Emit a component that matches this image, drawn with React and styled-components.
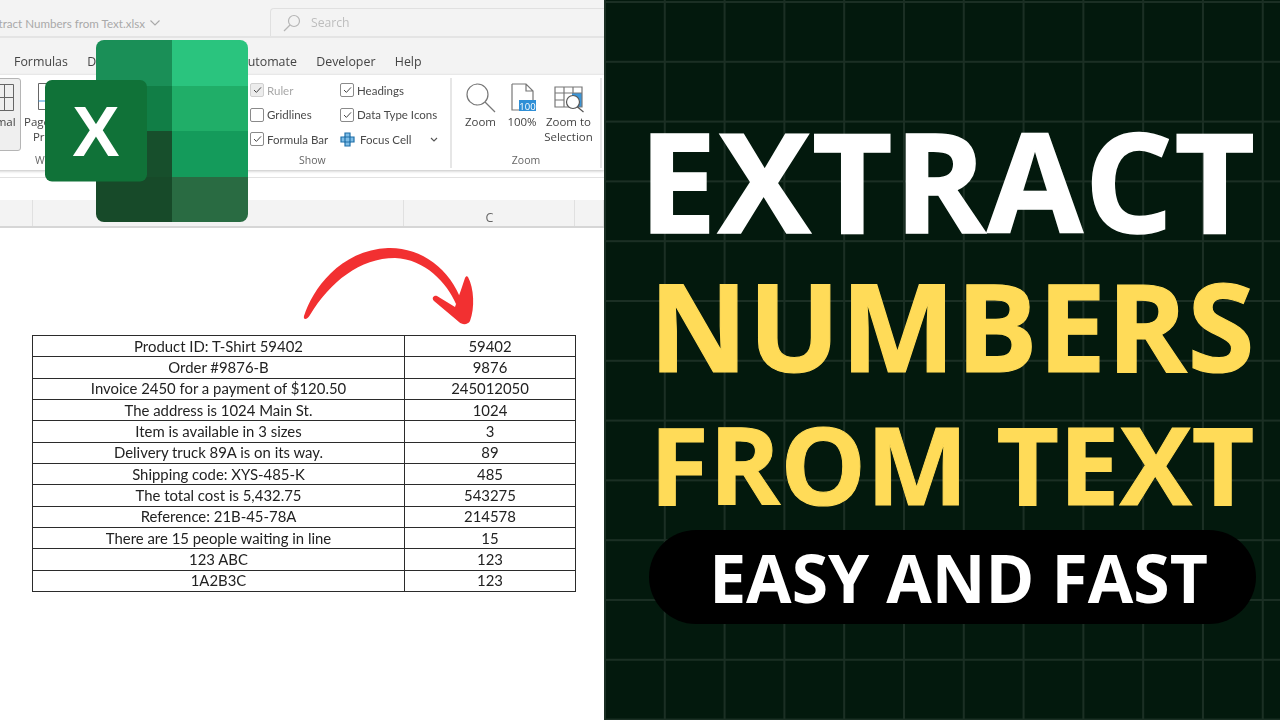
import React from 'react';
import styled, { createGlobalStyle } from 'styled-components';

const GlobalStyle = createGlobalStyle`
  html, body {
    margin: 0;
    padding: 0;
    width: 1280px;
    height: 720px;
    overflow: hidden;
    background: #fff;
  }
`;

const Page = styled.div`
  display: flex;
  width: 1280px;
  height: 720px;
  overflow: hidden;
`;

const LeftPane = styled.div`
  position: relative;
  display: flex;
  flex-direction: column;
  width: 604px;
  height: 720px;
  overflow: hidden;
  background: #fff;
  font-family: "Open Sans", "Liberation Sans", sans-serif;
`;

const ExcelChrome = styled.div`
  display: flex;
  flex-direction: column;
  filter: blur(0.35px);
`;

const TitleBar = styled.div`
  display: flex;
  align-items: stretch;
  height: 38px;
  box-sizing: border-box;
  padding-top: 8px;
  background: #f3f3f3;
  border-bottom: 2px solid #e4e4e4;
`;

const FileName = styled.div`
  display: flex;
  align-items: center;
  gap: 5px;
  width: 270px;
  height: 30px;
  overflow: hidden;
  font-family: Lato, "Open Sans", sans-serif;
  font-size: 11.6px;
  color: #a9a9a9;
  white-space: nowrap;
`;

const FileTitle = styled.span`
  margin-left: -14px;
`;

const SearchBox = styled.div`
  display: flex;
  align-items: center;
  gap: 9px;
  flex: 1;
  padding-left: 11px;
  border: 1px solid #e0e0e0;
  border-bottom: 0;
  border-right: 0;
  border-radius: 4px 0 0 0;
  font-size: 12.2px;
  color: #bdbdbd;
`;

const TabBar = styled.div`
  display: flex;
  align-items: center;
  gap: 19.3px;
  height: 37px;
  padding: 9px 0 0 14px;
  box-sizing: border-box;
  background: #f3f3f3;
  font-size: 12.4px;
  color: #444;
  white-space: nowrap;
`;

const Ribbon = styled.div`
  display: flex;
  height: 95px;
  margin-left: -30px;
  background: #fff;
  box-shadow: 0 1px 3px rgba(0, 0, 0, 0.25);
`;

const Group = styled.div`
  display: flex;
  flex-direction: column;
  flex: none;
  width: ${p => p.$width}px;
  height: 90px;
  margin-top: 3px;
  box-sizing: border-box;
  border-right: ${p => (p.$divider ? '2px solid #e6e6e6' : '0')};
`;

const GroupBody = styled.div`
  display: flex;
  flex: 1;
  min-height: 0;
`;

const GroupLabel = styled.div`
  height: 15px;
  padding-left: ${p => p.$indent || 0}px;
  text-align: ${p => (p.$indent ? 'left' : 'center')};
  font-size: 10.5px;
  line-height: 15px;
  color: #666;
`;

const BigButton = styled.div`
  display: flex;
  flex-direction: column;
  align-items: center;
  flex: none;
  width: ${p => p.$width}px;
  height: ${p => (p.$selected ? 73 : 70)}px;
  box-sizing: border-box;
  padding-top: ${p => (p.$selected ? 4 : 5)}px;
  background: ${p => (p.$selected ? '#efefef' : 'transparent')};
  border: ${p => (p.$selected ? '1px solid #b5b5b5' : '0')};
  border-radius: 3px;
  font-size: 11.5px;
  line-height: 15px;
  color: #444;
  text-align: center;
`;

const IconSlot = styled.div`
  flex: none;
  height: 31px;
`;

const ShowGroupBody = styled(GroupBody)`
  padding: 3px 0 0 0;
  gap: 12px;
`;

const CheckColumn = styled.div`
  display: flex;
  flex-direction: column;
  gap: 6.5px;
  width: ${p => p.$width}px;
`;

const CheckRow = styled.div`
  display: flex;
  align-items: center;
  gap: 3px;
  height: 18px;
  font-family: Lato, "Open Sans", sans-serif;
  font-size: 11.5px;
  color: ${p => (p.$muted ? '#a8a8a8' : '#4a4a4a')};
  white-space: nowrap;
`;

const CheckBox = styled.span`
  display: flex;
  align-items: center;
  justify-content: center;
  flex: none;
  width: 12px;
  height: 12px;
  background: ${p => (p.$muted ? '#ececec' : '#fff')};
  border: 1px solid ${p => (p.$muted ? '#d0d0d0' : '#8a8a8a')};
  border-radius: 2px;
`;

const FocusLabel = styled.span`
  margin: 0 16px 0 2px;
`;

const ZoomGroupBody = styled(GroupBody)`
  padding-left: 8.5px;
  gap: 4.5px;
`;

const FormulaBar = styled.div`
  height: 22px;
  margin-top: 7px;
  background: #fff;
  border-top: 1px solid #e2e2e2;
`;

const ColumnHeader = styled.div`
  display: grid;
  grid-template-columns: 33px 371px 171px 29px;
  height: 28px;
  box-sizing: border-box;
  background: #f3f3f3;
  border-bottom: 2px solid #d6d6d6;
`;

const ColumnCell = styled.div`
  display: flex;
  align-items: center;
  justify-content: center;
  padding: 8px 0 0 1px;
  box-sizing: border-box;
  border-right: 1px solid #e0e0e0;
  font-size: 12.5px;
  color: #666;
`;

const Sheet = styled.div`
  flex: 1;
  padding: 107px 0 0 32px;
  filter: blur(0.3px);
`;

const DataTable = styled.table`
  width: 543px;
  table-layout: fixed;
  border-collapse: collapse;
  font-family: Lato, "Open Sans", sans-serif;
  font-size: 14.9px;
  color: #222;
`;

const DataCell = styled.td`
  box-sizing: border-box;
  height: 21.33px;
  padding: 0;
  border: 1px solid #2b2b2b;
  text-align: center;
  line-height: 19px;
  white-space: nowrap;
`;

const LogoMark = styled.svg`
  position: absolute;
  left: 45px;
  top: 40px;
`;

const CurvedArrow = styled.svg`
  position: absolute;
  left: 296px;
  top: 240px;
`;

const RightPane = styled.div`
  display: flex;
  flex-direction: column;
  align-items: center;
  flex: 1;
  height: 720px;
  box-sizing: border-box;
  padding: 110px 0 0 20px;
  background-color: #03190d;
  background-image:
    linear-gradient(to right, #1b2f24 2px, transparent 2px),
    linear-gradient(to bottom, #1b2f24 2px, transparent 2px);
  background-size: 59.8px 59.8px;
  background-position: 0 1px;
  font-family: "Open Sans", "Noto Sans", sans-serif;
`;

const Headline = styled.div`
  margin-top: ${p => p.$gap || 0}px;
  margin-left: ${p => p.$nudge || 0}px;
  font-size: ${p => p.$size}px;
  font-weight: 700;
  line-height: 1;
  letter-spacing: ${p => p.$track || 0}px;
  color: ${p => p.$color};
  -webkit-text-stroke: ${p => p.$stroke}px ${p => p.$color};
  white-space: nowrap;
`;

const Pill = styled.div`
  display: flex;
  align-items: center;
  justify-content: center;
  width: 607px;
  height: 94px;
  margin-top: 12px;
  box-sizing: border-box;
  padding-left: 13px;
  background: #000;
  border-radius: 47px;
  font-size: 66px;
  font-weight: 700;
  color: #fff;
  white-space: nowrap;
`;

const Check = () => (
  <svg width="9" height="8" viewBox="0 0 9 8" fill="none" stroke="#444" strokeWidth="1">
    <path d="M1 4l2.4 2.4L8 1.4" />
  </svg>
);

const SearchIcon = () => (
  <svg width="20" height="20" viewBox="0 0 20 20" fill="none" stroke="#b5b5b5" strokeWidth="1.2">
    <circle cx="12" cy="8" r="5.5" />
    <path d="M8 12l-6 6" />
  </svg>
);

const Chevron = () => (
  <svg width="10" height="6" viewBox="0 0 10 6" fill="none" stroke="#a9a9a9" strokeWidth="1.1">
    <path d="M0.5 0.5L5 5l4.5-4.5" />
  </svg>
);

const rows = [
  ['Product ID: T-Shirt 59402', '59402'],
  ['Order #9876-B', '9876'],
  ['Invoice 2450 for a payment of $120.50', '245012050'],
  ['The address is 1024 Main St.', '1024'],
  ['Item is available in 3 sizes', '3'],
  ['Delivery truck 89A is on its way.', '89'],
  ['Shipping code: XYS-485-K', '485'],
  ['The total cost is 5,432.75', '543275'],
  ['Reference: 21B-45-78A', '214578'],
  ['There are 15 people waiting in line', '15'],
  ['123 ABC', '123'],
  ['1A2B3C', '123'],
];

const tabs = ['Formulas', 'Data', 'Review', 'View', 'Automate', 'Developer', 'Help'];

const App = () => (
  <Page>
    <GlobalStyle />
    <LeftPane>
      <ExcelChrome>
        <TitleBar>
          <FileName>
            <FileTitle>Extract Numbers from Text.xlsx</FileTitle>
            <Chevron />
          </FileName>
          <SearchBox>
            <SearchIcon />
            Search
          </SearchBox>
        </TitleBar>
        <TabBar>
          {tabs.map(t => <span key={t}>{t}</span>)}
        </TabBar>
        <Ribbon>
          <Group $width={280}>
            <GroupBody>
              <BigButton $width={51} $selected>
                <IconSlot>
                  <svg width="40" height="29" viewBox="0 0 40 29" fill="none" stroke="#666">
                    <path d="M10.5 1.5h27v26h-27zM19.5 1.5v26M28.5 1.5v26M10.5 14.5h27" />
                  </svg>
                </IconSlot>
                Normal
              </BigButton>
              <BigButton $width={66}>
                <IconSlot>
                  <svg width="32" height="29" viewBox="0 0 32 29" fill="none" stroke="#666">
                    <path d="M0.5 0.5h12v26H0.5z" />
                    <path d="M0.5 18h12" stroke="#3a95d8" />
                  </svg>
                </IconSlot>
                Page Break
                <br />
                Preview
              </BigButton>
            </GroupBody>
            <GroupLabel $indent={65}>Workbook Views</GroupLabel>
          </Group>
          <Group $width={202} $divider>
            <ShowGroupBody>
              <CheckColumn $width={78}>
                <CheckRow $muted>
                  <CheckBox $muted><Check /></CheckBox>
                  Ruler
                </CheckRow>
                <CheckRow>
                  <CheckBox />
                  Gridlines
                </CheckRow>
                <CheckRow>
                  <CheckBox><Check /></CheckBox>
                  Formula Bar
                </CheckRow>
              </CheckColumn>
              <CheckColumn $width={105}>
                <CheckRow>
                  <CheckBox><Check /></CheckBox>
                  Headings
                </CheckRow>
                <CheckRow>
                  <CheckBox><Check /></CheckBox>
                  Data Type Icons
                </CheckRow>
                <CheckRow>
                  <svg width="15" height="15" viewBox="0 0 15 15" fill="#7fbde6" stroke="#1e6fa8" strokeWidth="1.2">
                    <path d="M5 1h5v4h4v5h-4v4H5v-4H1V5h4z" />
                    <path d="M5 5h5v5H5z" fill="none" />
                  </svg>
                  <FocusLabel>Focus Cell</FocusLabel>
                  <svg width="8" height="5" viewBox="0 0 8 5" fill="none" stroke="#555" strokeWidth="1.1">
                    <path d="M1 1l3 3 3-3" />
                  </svg>
                </CheckRow>
              </CheckColumn>
            </ShowGroupBody>
            <GroupLabel $indent={49}>Show</GroupLabel>
          </Group>
          <Group $width={150} $divider>
            <ZoomGroupBody>
              <BigButton $width={40}>
                <IconSlot>
                  <svg width="32" height="30" viewBox="0 0 32 30" fill="none" stroke="#777" strokeWidth="1.2">
                    <circle cx="12.5" cy="11.5" r="10.5" />
                    <path d="M20 19l10 10" />
                  </svg>
                </IconSlot>
                Zoom
              </BigButton>
              <BigButton $width={34}>
                <IconSlot>
                  <svg width="28" height="30" viewBox="0 0 28 30" fill="none">
                    <path d="M4 1h14l7 7v9M4 1v26h7M18 1v7h7" stroke="#777" strokeWidth="1.2" />
                    <rect x="11" y="17" width="17" height="11" fill="#2f8fd6" />
                    <text x="19.5" y="26.5" textAnchor="middle" fontFamily="Open Sans" fontSize="9.5" fill="#fff">100</text>
                  </svg>
                </IconSlot>
                100%
              </BigButton>
              <BigButton $width={50}>
                <IconSlot>
                  <svg width="32" height="30" viewBox="0 0 32 30" fill="none" stroke="#777" strokeWidth="1.2">
                    <rect x="19" y="10" width="10" height="14" fill="#3a95d8" stroke="none" />
                    <path d="M2 4h27v20H2zM2 10h27M2 17h9M11 4v20M20 4v6" />
                    <circle cx="20" cy="19" r="6.5" fill="#fff" stroke="#555" />
                    <path d="M24.5 24l6 5" stroke="#555" />
                  </svg>
                </IconSlot>
                Zoom to
                <br />
                Selection
              </BigButton>
            </ZoomGroupBody>
            <GroupLabel>Zoom</GroupLabel>
          </Group>
        </Ribbon>
        <FormulaBar />
        <ColumnHeader>
          <ColumnCell />
          <ColumnCell />
          <ColumnCell>C</ColumnCell>
          <ColumnCell />
        </ColumnHeader>
      </ExcelChrome>
      <Sheet>
        <DataTable>
          <colgroup>
            <col width="372" />
            <col width="171" />
          </colgroup>
          <tbody>
            {rows.map(([text, number]) => (
              <tr key={text}>
                <DataCell>{text}</DataCell>
                <DataCell>{number}</DataCell>
              </tr>
            ))}
          </tbody>
        </DataTable>
      </Sheet>
      <LogoMark width="203" height="182" viewBox="0 0 203 182">
        <defs>
          <clipPath id="sheetClip">
            <rect x="51" y="0" width="152" height="182" rx="8" />
          </clipPath>
        </defs>
        <g clipPath="url(#sheetClip)">
          <rect x="51" y="0" width="76" height="46" fill="#1a8f57" />
          <rect x="127" y="0" width="76" height="46" fill="#2ac47e" />
          <rect x="51" y="46" width="76" height="45" fill="#117e46" />
          <rect x="127" y="46" width="76" height="45" fill="#20ae68" />
          <rect x="51" y="91" width="76" height="46" fill="#174f2c" />
          <rect x="127" y="91" width="76" height="46" fill="#149b5b" />
          <rect x="51" y="137" width="76" height="45" fill="#174a29" />
          <rect x="127" y="137" width="76" height="45" fill="#296b42" />
        </g>
        <rect x="0" y="40" width="102" height="101.5" rx="7" fill="#107238" />
        <text x="51" y="116" textAnchor="middle" fontFamily="Liberation Sans" fontWeight="700" fontSize="71" fill="#fff">X</text>
      </LogoMark>
      <CurvedArrow width="184" height="90" viewBox="0 0 184 90" fill="#f23031">
        <path d="M8 76C16 50 44 10 92 8C124 7 154 28 166 62L160 64C151 43 129 19 99 18C64 18 34 42 14 75C11 80 7 80 8 76Z" />
        <path d="M172 37C178 48 179 68 174 81C172 85 166 85 163 82L138 61C135 58 138 55 141 56L159 67C163 56 167 44 169 38C170 36 171 36 172 37Z" />
      </CurvedArrow>
    </LeftPane>
    <RightPane>
      <Headline $size={139} $color="#fff" $stroke={1.5} $track={1.4} $nudge={-9}>EXTRACT</Headline>
      <Headline $size={121.5} $color="#ffdb58" $stroke={1.2} $track={0.6} $gap={16}>NUMBERS</Headline>
      <Headline $size={108} $color="#ffdb58" $stroke={1} $track={0.1} $gap={23.5}>FROM TEXT</Headline>
      <Pill>EASY AND FAST</Pill>
    </RightPane>
  </Page>
);

export default App;
